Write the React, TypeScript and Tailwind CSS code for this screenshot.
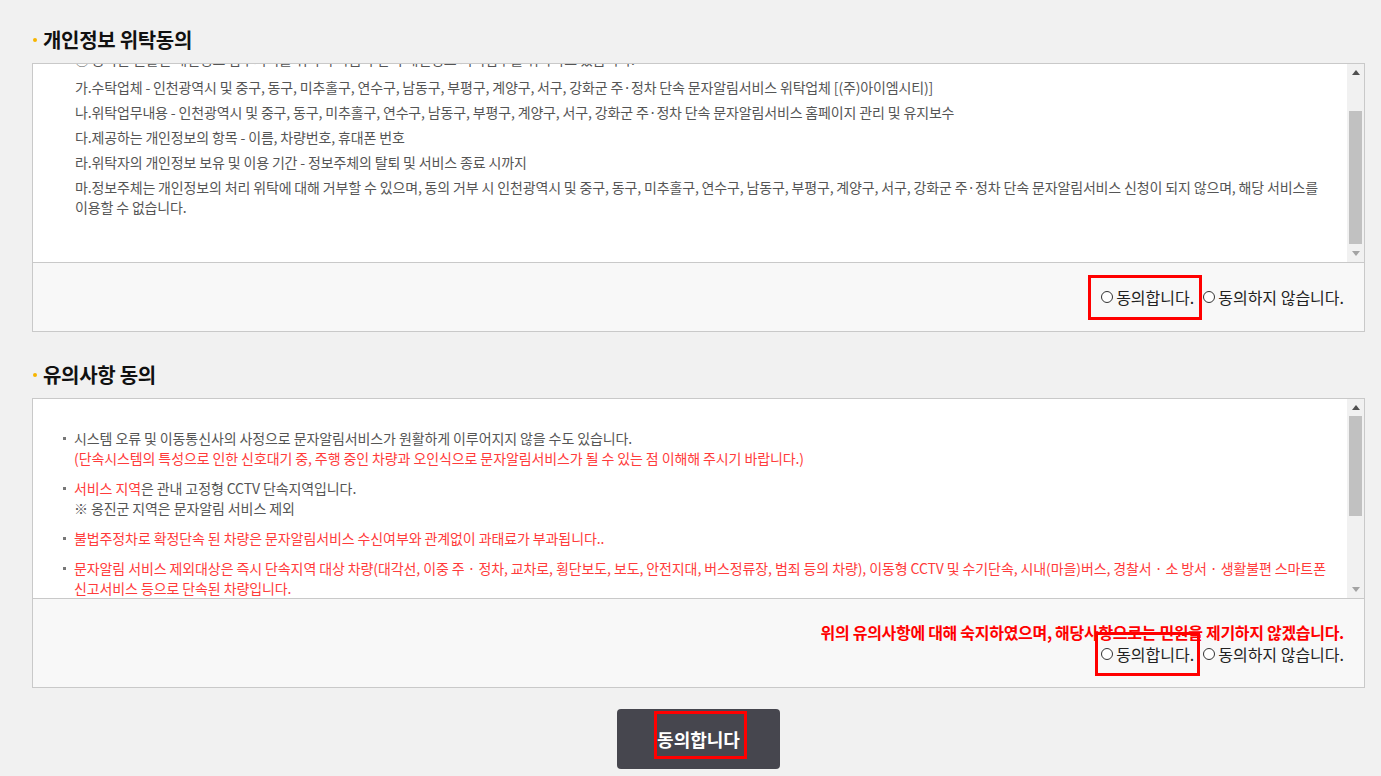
import React from "react";

const FONT = '"Noto Sans CJK KR", "Noto Sans", sans-serif';

function Title({ children }: { children: React.ReactNode }) {
  return (
    <div className="flex items-center h-[26px]">
      <span className="w-[4px] h-[4px] rounded-full bg-[#f7b500] ml-[1px] mr-[6px]" />
      <h2 className="text-[20px] font-bold leading-[26px] text-[#111] tracking-[-0.3px]">{children}</h2>
    </div>
  );
}

function ScrollBar({ thumbTop, thumbH }: { thumbTop: number; thumbH: number }) {
  return (
    <div className="w-[17px] shrink-0 bg-[#f1f1f1] flex flex-col">
      <div className="h-[17px] flex items-center justify-center">
        <svg width="8" height="5" viewBox="0 0 8 5"><path d="M0 5 L4 0 L8 5 Z" fill="#505050" /></svg>
      </div>
      <div className="flex-1 px-[2px]">
        <div style={{ marginTop: thumbTop, height: thumbH }} className="bg-[#c1c1c1]" />
      </div>
      <div className="h-[17px] flex items-center justify-center">
        <svg width="8" height="5" viewBox="0 0 8 5"><path d="M0 0 L4 5 L8 0 Z" fill="#a3a3a3" /></svg>
      </div>
    </div>
  );
}

function Radio({ label, highlight }: { label: string; highlight?: "a" | "b" }) {
  return (
    <label className="relative flex items-center text-[16px] text-[#222] leading-[20px]">
      <span className="w-[12px] h-[12px] rounded-full border border-[#333] bg-white mr-[3px] shrink-0" />
      <span>{label}</span>
      {highlight === "a" && (
        <span className="absolute -left-[13px] -right-[8px] -top-[12px] -bottom-[13px] border-[3px] border-[#ff0000]" />
      )}
      {highlight === "b" && (
        <span className="absolute -left-[6px] -right-[6px] -top-[12px] -bottom-[12px] border-[3px] border-[#ff0000]" />
      )}
    </label>
  );
}

export default function App() {
  const items1 = [
    "가.수탁업체 - 인천광역시 및 중구, 동구, 미추홀구, 연수구, 남동구, 부평구, 계양구, 서구, 강화군 주·정차 단속 문자알림서비스 위탁업체 [(주)아이엠시티)]",
    "나.위탁업무내용 - 인천광역시 및 중구, 동구, 미추홀구, 연수구, 남동구, 부평구, 계양구, 서구, 강화군 주·정차 단속 문자알림서비스 홈페이지 관리 및 유지보수",
    "다.제공하는 개인정보의 항목 - 이름, 차량번호, 휴대폰 번호",
    "라.위탁자의 개인정보 보유 및 이용 기간 - 정보주체의 탈퇴 및 서비스 종료 시까지",
  ];
  const red = "text-[#ff3b3b]";
  return (
    <div className="min-h-screen bg-[#f1f1f1] pl-[32px] pr-[16px] pt-[27px]" style={{ fontFamily: FONT }}>
      {/* Section 1 */}
      <Title>개인정보 위탁동의</Title>
      <div className="mt-[10px] border border-[#c9c9c9] bg-white">
        <div className="flex h-[198px]">
          <div className="flex-1 overflow-hidden pl-[42px] text-[14px] leading-[20px] text-[#555] tracking-[-0.15px]">
            <div className="-mt-[15px]">
              <p className="mb-[8px] whitespace-nowrap">
                ① 공사는 원활한 개인정보 업무처리를 위하여 다음과 같이 개인정보 처리업무를 위탁하고 있습니다.
              </p>
              {items1.map((t) => (
                <p key={t} className="mb-[5px] whitespace-nowrap">{t}</p>
              ))}
              <p className="mb-[5px] whitespace-nowrap">
                마.정보주체는 개인정보의 처리 위탁에 대해 거부할 수 있으며, 동의 거부 시 인천광역시 및 중구, 동구, 미추홀구, 연수구, 남동구, 부평구, 계양구, 서구, 강화군 주·정차 단속 문자알림서비스 신청이 되지 않으며, 해당 서비스를
                <br />
                이용할 수 없습니다.
              </p>
            </div>
          </div>
          <ScrollBar thumbTop={30} thumbH={133} />
        </div>
        <div className="border-t border-[#c9c9c9] bg-[#f8f8f8] h-[69px] flex items-center justify-end pr-[20px] gap-[9px]">
          <Radio label="동의합니다." highlight="a" />
          <Radio label="동의하지 않습니다." />
        </div>
      </div>

      {/* Section 2 */}
      <div className="mt-[30px]">
        <Title>유의사항 동의</Title>
      </div>
      <div className="mt-[10px] border border-[#c9c9c9] bg-white">
        <div className="flex h-[199px]">
          <div className="flex-1 overflow-hidden pl-[30px] pt-[29px] text-[14px] leading-[20px] text-[#555] tracking-[-0.1px]">
            <ul>
              <li className="flex mb-[10px]">
                <span className="w-[3px] h-[3px] bg-[#777] mt-[9px] mr-[8px] shrink-0" />
                <div className="whitespace-nowrap">
                  시스템 오류 및 이동통신사의 사정으로 문자알림서비스가 원활하게 이루어지지 않을 수도 있습니다.
                  <br />
                  <span className={red}>(단속시스템의 특성으로 인한 신호대기 중, 주행 중인 차량과 오인식으로 문자알림서비스가 될 수 있는 점 이해해 주시기 바랍니다.)</span>
                </div>
              </li>
              <li className="flex mb-[10px]">
                <span className="w-[3px] h-[3px] bg-[#777] mt-[9px] mr-[8px] shrink-0" />
                <div className="whitespace-nowrap">
                  <span className={red}>서비스 지역</span>은 관내 고정형 CCTV 단속지역입니다.
                  <br />※ 옹진군 지역은 문자알림 서비스 제외
                </div>
              </li>
              <li className="flex mb-[10px]">
                <span className="w-[3px] h-[3px] bg-[#777] mt-[9px] mr-[8px] shrink-0" />
                <div className={`whitespace-nowrap ${red}`}>
                  불법주정차로 확정단속 된 차량은 문자알림서비스 수신여부와 관계없이 과태료가 부과됩니다..
                </div>
              </li>
              <li className="flex mb-[10px]">
                <span className="w-[3px] h-[3px] bg-[#777] mt-[9px] mr-[8px] shrink-0" />
                <div className={`whitespace-nowrap ${red}`}>
                  문자알림 서비스 제외대상은 즉시 단속지역 대상 차량(대각선, 이중 주 · 정차, 교차로, 횡단보도, 보도, 안전지대, 버스정류장, 범죄 등의 차량), 이동형 CCTV 및 수기단속, 시내(마을)버스, 경찰서 · 소 방서 · 생활불편 스마트폰
                  <br />
                  신고서비스 등으로 단속된 차량입니다.
                </div>
              </li>
            </ul>
          </div>
          <ScrollBar thumbTop={0} thumbH={100} />
        </div>
        <div className="border-t border-[#c9c9c9] bg-[#f8f8f8] h-[89px] flex flex-col items-end justify-center pr-[20px]">
          <p className="text-[16px] font-bold leading-[22px] text-[#ff0000] tracking-[-0.3px]">
            위의 유의사항에 대해 숙지하였으며, 해당사항으로는 민원을 제기하지 않겠습니다.
          </p>
          <div className="flex items-center gap-[9px] h-[22px]">
            <Radio label="동의합니다." highlight="b" />
            <Radio label="동의하지 않습니다." />
          </div>
        </div>
      </div>

      {/* Button */}
      <div className="flex justify-center mt-[21px]">
        <button className="relative w-[163px] h-[60px] rounded-[4px] bg-[#46464e] text-white text-[18px] font-bold">
          동의합니다
          <span className="absolute left-[37px] right-[33px] top-[2px] bottom-[10px] border-[3px] border-[#ff0000]" />
        </button>
      </div>
    </div>
  );
}
